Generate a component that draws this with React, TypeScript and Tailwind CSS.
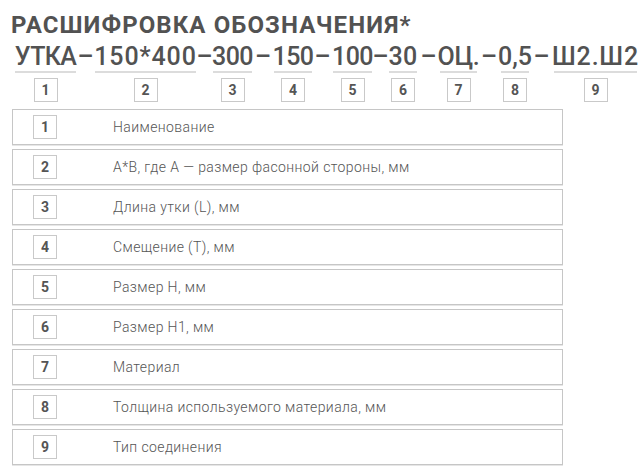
const SEGMENTS = [
  { code: "УТКА", w: "w-[61px]", gap: "w-[19px]", tr: "tracking-[-0.6px]" },
  { code: "150*400", w: "w-[101px]", gap: "w-[17px]", tr: "tracking-[0.9px]" },
  { code: "300", w: "w-[39px]", gap: "w-[22px]", tr: "tracking-[-0.6px]" },
  { code: "150", w: "w-[38px]", gap: "w-[21px]", tr: "tracking-[-0.6px]" },
  { code: "100", w: "w-[39px]", gap: "w-[17px]", tr: "tracking-[-0.6px]" },
  { code: "30", w: "w-[28px]", gap: "w-[23px]", tr: "tracking-[0.4px]" },
  { code: "ОЦ.", w: "w-[37px]", gap: "w-[24px]", tr: "tracking-[-0.2px]" },
  { code: "0,5", w: "w-[28px]", gap: "w-[25px]", tr: "tracking-[0px]" },
  { code: "Ш2.Ш2", w: "w-[83px]", gap: "", tr: "tracking-[0.8px]" },
];

const ROWS = [
  "Наименование",
  "A*B, где A — размер фасонной стороны, мм",
  "Длина утки (L), мм",
  "Смещение (T), мм",
  "Размер H, мм",
  "Размер H1, мм",
  "Материал",
  "Толщина используемого материала, мм",
  "Тип соединения",
];

function NumBox({ n }: { n: number }) {
  return (
    <div className="w-6 h-6 border border-[#c9c9c9] flex items-center justify-center text-[14px] font-bold text-[#555]">
      {n}
    </div>
  );
}

export default function App() {
  return (
    <div className="w-[643px] h-[471px] bg-white text-[#525252] overflow-hidden" style={{ fontFamily: "Roboto, 'Noto Sans', sans-serif" }}>
      <h1 className="pl-[11px] pt-[11px] text-[24px] leading-[28px] font-bold tracking-[1.1px] whitespace-nowrap">
        РАСШИФРОВКА ОБОЗНАЧЕНИЯ*
      </h1>
      <div className="flex pl-[15px] mt-[3px]">
        {SEGMENTS.map((s, i) => (
          <div key={i} className="flex">
            <div className={`${s.w} flex flex-col items-center`}>
              <div className={`${s.tr} h-[29px] text-[25px] leading-[29px] font-medium whitespace-nowrap`}>{s.code}</div>
              <div className="w-full h-[2px] bg-[#dcdcdc]" />
              <div className="mt-[5px]">
                <NumBox n={i + 1} />
              </div>
            </div>
            {s.gap && (
              <div className={`${s.gap} h-[29px] text-[25px] leading-[29px] font-medium flex justify-center`}>–</div>
            )}
          </div>
        ))}
      </div>
      <div className="mt-[7px] ml-[12px] w-[551px] flex flex-col gap-1">
        {ROWS.map((r, i) => (
          <div
            key={i}
            className="h-9 border border-[#c6c6c6] shadow-[0_1px_0_#e6e6e6] flex items-center pl-5"
          >
            <NumBox n={i + 1} />
            <div className="ml-[56px] text-[14px] font-light text-[#555] tracking-[0.4px]">{r}</div>
          </div>
        ))}
      </div>
    </div>
  );
}
